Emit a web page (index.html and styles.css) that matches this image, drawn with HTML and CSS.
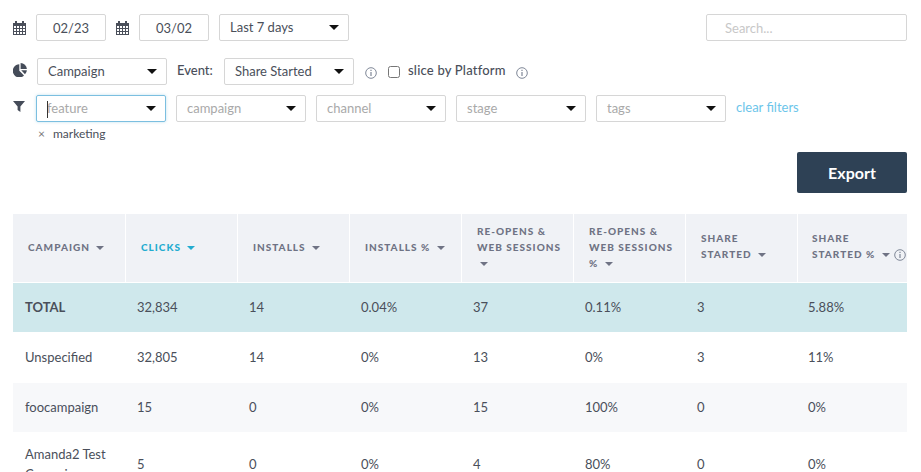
FILE: index.html
```html
<!DOCTYPE html>
<html lang="en">
<head>
  <meta charset="UTF-8">
  <title>Campaign analytics</title>
  <link rel="stylesheet" href="styles.css">
</head>
<body>

  <svg class="defs" width="0" height="0">
    <symbol id="cal" viewBox="0 0 13 14">
      <path fill="#4a4f5a" fill-rule="evenodd" d="M2 0h2v2h5V0h2v2h2v12H0V2h2zM1 5v2h2V5zm3 0v2h2V5zm3 0v2h2V5zm3 0v2h2V5zM1 8v2h2V8zm3 0v2h2V8zm3 0v2h2V8zm3 0v2h2V8zM1 11v2h2v-2zm3 0v2h2v-2zm3 0v2h2v-2zm3 0v2h2v-2z"/>
    </symbol>
    <symbol id="info" viewBox="0 0 12 12">
      <circle cx="6" cy="6" r="5.3" fill="none" stroke="#7f8797"/>
      <path fill="#7f8797" d="M5.4 2.8h1.2V4H5.4zM5.4 5h1.2v4H5.4z"/>
    </symbol>
  </svg>

  <div class="filters">
    <div class="row row-dates">
      <svg class="icon-cal"><use href="#cal"/></svg>
      <input class="date" type="text" value="02/23">
      <svg class="icon-cal"><use href="#cal"/></svg>
      <input class="date" type="text" value="03/02">
      <div class="select"><span>Last 7 days</span></div>
      <input class="search" type="text" placeholder="Search...">
    </div>

    <div class="row row-event">
      <svg class="icon-pie" viewBox="0 0 14 14">
        <path fill="#454c59" d="M6.3 1.2v6.6l4.7 4.7A6.6 6.6 0 1 1 6.3 1.2z"/>
        <path fill="#454c59" d="M7.6 0a6.4 6.4 0 0 1 6.3 5.9H7.6z"/>
        <path fill="#454c59" d="M8.2 7.2h5.7a6.4 6.4 0 0 1-1.9 4z"/>
      </svg>
      <div class="select"><span>Campaign</span></div>
      <label class="event-label">Event:</label>
      <div class="select"><span>Share Started</span></div>
      <svg class="icon-info"><use href="#info"/></svg>
      <input class="check" type="checkbox">
      <label class="slice-label">slice by Platform</label>
      <svg class="icon-info"><use href="#info"/></svg>
    </div>

    <div class="row row-tags">
      <svg class="icon-filter" viewBox="0 0 12 11">
        <path fill="#454c59" d="M0 0h12L7.4 5.4V11L4.6 9V5.4z"/>
      </svg>
      <div class="select empty focused"><i class="cursor"></i><span>feature</span></div>
      <div class="select empty"><span>campaign</span></div>
      <div class="select empty"><span>channel</span></div>
      <div class="select empty"><span>stage</span></div>
      <div class="select empty"><span>tags</span></div>
      <a class="clear" href="#">clear filters</a>
    </div>

    <div class="chosen"><span class="remove">×</span>marketing</div>
  </div>

  <div class="actions">
    <button class="export">Export</button>
  </div>

  <table class="report">
    <thead>
      <tr>
        <th>CAMPAIGN <b class="sort"></b></th>
        <th class="active">CLICKS <b class="sort"></b></th>
        <th>INSTALLS <b class="sort"></b></th>
        <th>INSTALLS % <b class="sort"></b></th>
        <th>RE-OPENS &amp; WEB SESSIONS <b class="sort"></b></th>
        <th>RE-OPENS &amp; WEB SESSIONS % <b class="sort"></b></th>
        <th class="two-line">SHARE STARTED <b class="sort"></b></th>
        <th class="two-line last">SHARE<br>STARTED % <b class="sort"></b><svg class="icon-info th-info"><use href="#info"/></svg></th>
      </tr>
    </thead>
    <tbody>
      <tr class="total">
        <td>TOTAL</td><td>32,834</td><td>14</td><td>0.04%</td><td>37</td><td>0.11%</td><td>3</td><td>5.88%</td>
      </tr>
      <tr>
        <td>Unspecified</td><td>32,805</td><td>14</td><td>0%</td><td>13</td><td>0%</td><td>3</td><td>11%</td>
      </tr>
      <tr class="alt">
        <td>foocampaign</td><td>15</td><td>0</td><td>0%</td><td>15</td><td>100%</td><td>0</td><td>0%</td>
      </tr>
      <tr class="tall">
        <td>Amanda2 Test Campaign</td><td>5</td><td>0</td><td>0%</td><td>4</td><td>80%</td><td>0</td><td>0%</td>
      </tr>
    </tbody>
  </table>

</body>
</html>
```

FILE: styles.css
```css
html, body {
  overflow: hidden;
}
body {
  margin: 0;
  padding: 14px 14px 0 13px;
  background: white;
  color: #4a4f5a;
  font-family: Lato, Arial, sans-serif;
  font-size: 13px;
}
.defs {
  position: absolute;
}
.row {
  display: flex;
  align-items: center;
}
.row-dates {
  height: 27px;
}
.row-event {
  height: 27px;
  margin-top: 17px;
}
.row-tags {
  height: 27px;
  margin-top: 10px;
}
.icon-cal {
  width: 13px;
  height: 14px;
  margin-right: 10px;
  flex: none;
}
.date {
  box-sizing: border-box;
  width: 70px;
  height: 27px;
  margin-right: 10px;
  border: 1px solid #d6d6d6;
  border-radius: 2px;
  padding: 0;
  text-align: center;
  color: #4a4f5a;
  font: 13px Lato, Arial, sans-serif;
}
.search {
  box-sizing: border-box;
  width: 201px;
  height: 27px;
  margin-left: auto;
  border: 1px solid #d6d6d6;
  border-radius: 2px;
  padding: 0 18px;
  font: 13px Lato, Arial, sans-serif;
}
.search::placeholder {
  color: #c8c8c8;
}
.select {
  box-sizing: border-box;
  position: relative;
  flex: none;
  width: 130px;
  height: 27px;
  line-height: 24px;
  margin-right: 10px;
  padding-left: 10px;
  border: 1px solid #d6d6d6;
  border-radius: 2px;
}
.select::after {
  content: "";
  position: absolute;
  right: 9px;
  top: 10px;
  border-top: 5px solid #111;
  border-left: 5px solid transparent;
  border-right: 5px solid transparent;
}
.empty {
  color: #a9a9a9;
}
.focused {
  border-color: #7cbfe0;
  box-shadow: 0 0 3px rgba(124, 191, 224, 0.5);
}
.cursor {
  position: absolute;
  left: 10px;
  top: 5px;
  width: 1px;
  height: 17px;
  background: #333;
}
.icon-pie {
  width: 14px;
  height: 14px;
  margin-right: 10px;
  margin-top: -4px;
}
.icon-filter {
  width: 12px;
  height: 11px;
  margin-right: 11px;
  margin-top: -5px;
}
.event-label {
  width: 47px;
  font-weight: 500;
  margin-top: -3px;
}
.icon-info {
  width: 12px;
  height: 12px;
  flex: none;
}
.row-event .icon-info {
  margin-left: 1px;
  margin-top: 3px;
}
.check {
  width: 12px;
  height: 12px;
  margin: 0 8px 0 11px;
  accent-color: white;
}
.slice-label {
  width: 107px;
  font-weight: 500;
  letter-spacing: 0.2px;
  margin-top: -3px;
}
.clear {
  color: #6cc5ea;
  text-decoration: none;
  margin-top: -3px;
}
.chosen {
  margin: 4px 0 0 25px;
  font-size: 12px;
  line-height: 16px;
}
.remove {
  margin-right: 8px;
  color: #777;
}
.actions {
  display: flex;
  justify-content: flex-end;
  margin-top: 10px;
}
.export {
  width: 110px;
  height: 41px;
  border: none;
  border-radius: 2px;
  background: #2e4155;
  color: white;
  font: 700 16px Lato, Arial, sans-serif;
}
.report {
  width: 894px;
  margin-top: 21px;
  table-layout: fixed;
  border-collapse: separate;
  border-spacing: 0;
}
.report th {
  box-sizing: border-box;
  width: 112px;
  height: 69px;
  padding: 0 8px 2px 15px;
  background: #f0f2f6;
  border-left: 1px solid white;
  border-bottom: 1px solid white;
  color: #6f7384;
  font-size: 10px;
  font-weight: 900;
  letter-spacing: 1px;
  line-height: 16px;
  text-align: left;
}
.report th:first-child {
  border-left: none;
}
.report .two-line {
  padding-bottom: 4px;
}
.report .last {
  width: 110px;
  padding-left: 14px;
  padding-right: 0;
}
.report .active {
  color: #23acd0;
}
.sort {
  display: inline-block;
  margin-left: 3px;
  vertical-align: middle;
  border-top: 4px solid currentColor;
  border-left: 4px solid transparent;
  border-right: 4px solid transparent;
}
.th-info {
  margin-left: 4px;
  vertical-align: -3px;
}
.report td {
  box-sizing: border-box;
  height: 50px;
  padding: 0 8px 1px 12px;
  border-bottom: 1px solid white;
  font-size: 13px;
  line-height: 20px;
}
.report td:last-child {
  padding-left: 11px;
}
.total td {
  background: #cfe8ec;
}
.total td:first-child {
  font-weight: 700;
}
.alt td {
  background: #f7f8fa;
}
.report .tall td {
  padding-top: 11px;
  padding-bottom: 11px;
}
```
